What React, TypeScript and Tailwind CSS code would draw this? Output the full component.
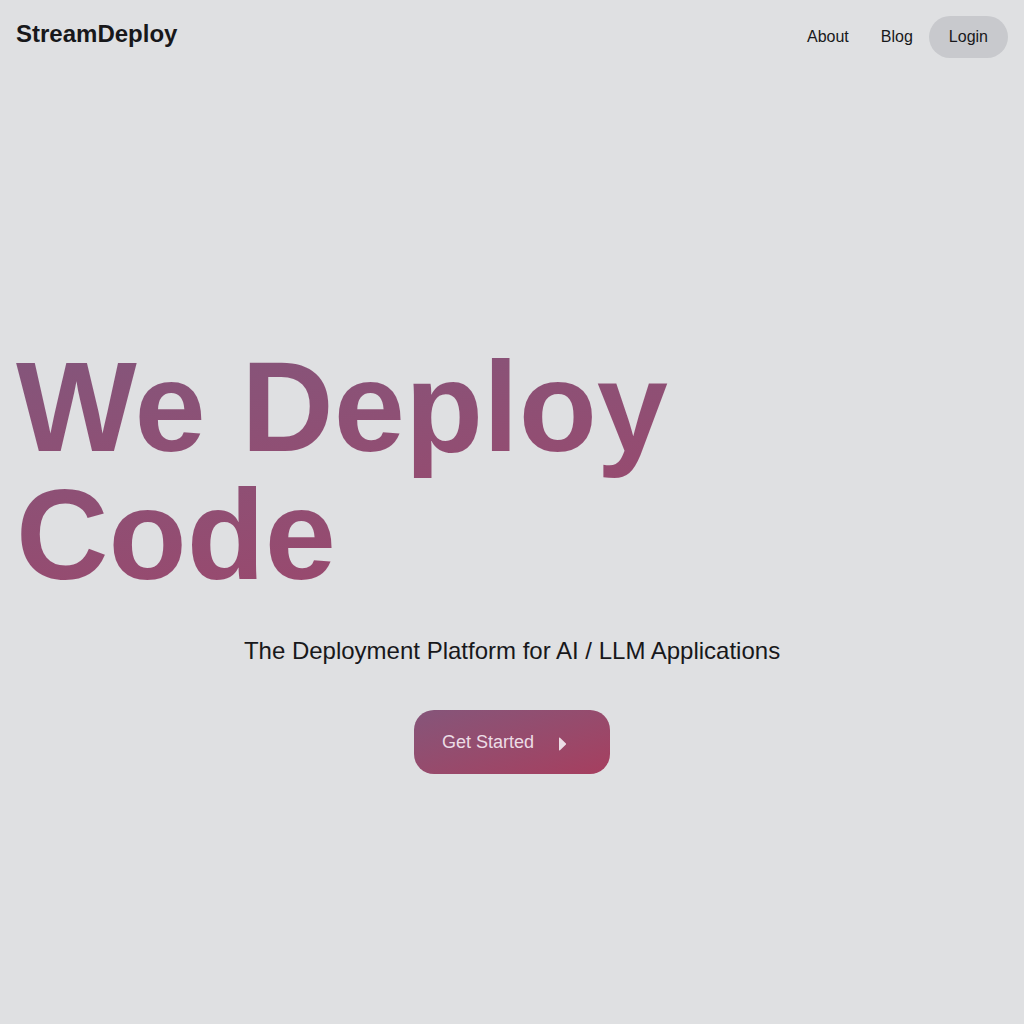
import React from "react";

const App: React.FC = () => {
  return (
    <div
      className="min-h-screen w-full bg-[#dfe0e2] text-[#18181b]"
      style={{ fontFamily: '"Liberation Sans", Arial, sans-serif' }}
    >
      <header className="flex items-center justify-between px-4 py-4">
        <a href="#" className="-mt-[7px] text-2xl font-bold text-[#18181b]">
          StreamDeploy
        </a>
        <nav className="flex items-center">
          <a href="#" className="-mt-px px-4 text-base">
            About
          </a>
          <a href="#" className="-mt-px px-4 text-base">
            Blog
          </a>
          <button className="h-[42px] rounded-full bg-[#c8c9cd] px-5 text-base">
            Login
          </button>
        </nav>
      </header>

      <main className="flex flex-col">
        <h1 className="mt-[269px] px-4 text-[128px] font-bold leading-none">
          <span className="bg-gradient-to-br from-[#82567c] to-[#9a486d] bg-clip-text text-transparent">
            We Deploy
            <br />
            Code
          </span>
        </h1>

        <p className="mt-[36px] text-center text-2xl text-[#18181b]">
          The Deployment Platform for AI / LLM Applications
        </p>

        <div className="mt-[43px] flex justify-center">
          <button className="flex h-16 w-[196px] items-center gap-6 rounded-[20px] bg-gradient-to-br from-[#85557a] to-[#a63e5f] pl-7 text-lg text-[#ecdde6]">
            Get Started
            <svg width="9" height="14" viewBox="0 0 9 14" className="mt-[3px]">
              <path d="M1 1.2 C1 0.6 1.5 0.4 2 0.8 L7.7 6.2 C8.2 6.6 8.2 7.4 7.7 7.8 L2 13.2 C1.5 13.6 1 13.4 1 12.8 Z" fill="#ecdde6" />
            </svg>
          </button>
        </div>
      </main>
    </div>
  );
};

export default App;
